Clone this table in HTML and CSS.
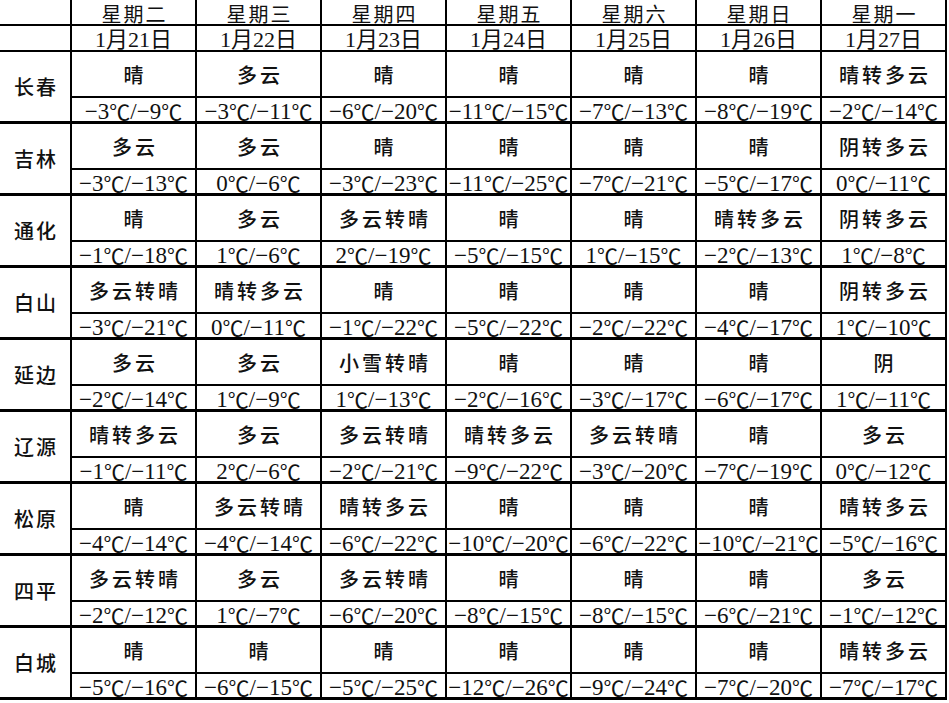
FILE: index.html
```html
<!DOCTYPE html>
<html lang="zh-CN">
<head>
<meta charset="utf-8">
<title>吉林省未来七天天气预报</title>
<link rel="stylesheet" href="styles.css">
</head>
<body>
<div class="grid">
  <div class="corner"></div>
  <div class="hd">星期二</div><div class="hd">星期三</div><div class="hd">星期四</div><div class="hd">星期五</div><div class="hd">星期六</div><div class="hd">星期日</div><div class="hd">星期一</div>
  <div class="corner"></div>
  <div class="dt">1月21日</div><div class="dt">1月22日</div><div class="dt">1月23日</div><div class="dt">1月24日</div><div class="dt">1月25日</div><div class="dt">1月26日</div><div class="dt">1月27日</div>

  <div class="city">长春</div>
  <div class="wx">晴</div><div class="wx">多云</div><div class="wx">晴</div><div class="wx">晴</div><div class="wx">晴</div><div class="wx">晴</div><div class="wx">晴转多云</div>
  <div class="tp">−3<i>℃</i>/−9<i>℃</i></div><div class="tp">−3<i>℃</i>/−11<i>℃</i></div><div class="tp">−6<i>℃</i>/−20<i>℃</i></div><div class="tp">−11<i>℃</i>/−15<i>℃</i></div><div class="tp">−7<i>℃</i>/−13<i>℃</i></div><div class="tp">−8<i>℃</i>/−19<i>℃</i></div><div class="tp">−2<i>℃</i>/−14<i>℃</i></div>

  <div class="city">吉林</div>
  <div class="wx">多云</div><div class="wx">多云</div><div class="wx">晴</div><div class="wx">晴</div><div class="wx">晴</div><div class="wx">晴</div><div class="wx">阴转多云</div>
  <div class="tp">−3<i>℃</i>/−13<i>℃</i></div><div class="tp">0<i>℃</i>/−6<i>℃</i></div><div class="tp">−3<i>℃</i>/−23<i>℃</i></div><div class="tp">−11<i>℃</i>/−25<i>℃</i></div><div class="tp">−7<i>℃</i>/−21<i>℃</i></div><div class="tp">−5<i>℃</i>/−17<i>℃</i></div><div class="tp">0<i>℃</i>/−11<i>℃</i></div>

  <div class="city">通化</div>
  <div class="wx">晴</div><div class="wx">多云</div><div class="wx">多云转晴</div><div class="wx">晴</div><div class="wx">晴</div><div class="wx">晴转多云</div><div class="wx">阴转多云</div>
  <div class="tp">−1<i>℃</i>/−18<i>℃</i></div><div class="tp">1<i>℃</i>/−6<i>℃</i></div><div class="tp">2<i>℃</i>/−19<i>℃</i></div><div class="tp">−5<i>℃</i>/−15<i>℃</i></div><div class="tp">1<i>℃</i>/−15<i>℃</i></div><div class="tp">−2<i>℃</i>/−13<i>℃</i></div><div class="tp">1<i>℃</i>/−8<i>℃</i></div>

  <div class="city">白山</div>
  <div class="wx">多云转晴</div><div class="wx">晴转多云</div><div class="wx">晴</div><div class="wx">晴</div><div class="wx">晴</div><div class="wx">晴</div><div class="wx">阴转多云</div>
  <div class="tp">−3<i>℃</i>/−21<i>℃</i></div><div class="tp">0<i>℃</i>/−11<i>℃</i></div><div class="tp">−1<i>℃</i>/−22<i>℃</i></div><div class="tp">−5<i>℃</i>/−22<i>℃</i></div><div class="tp">−2<i>℃</i>/−22<i>℃</i></div><div class="tp">−4<i>℃</i>/−17<i>℃</i></div><div class="tp">1<i>℃</i>/−10<i>℃</i></div>

  <div class="city">延边</div>
  <div class="wx">多云</div><div class="wx">多云</div><div class="wx">小雪转晴</div><div class="wx">晴</div><div class="wx">晴</div><div class="wx">晴</div><div class="wx">阴</div>
  <div class="tp">−2<i>℃</i>/−14<i>℃</i></div><div class="tp">1<i>℃</i>/−9<i>℃</i></div><div class="tp">1<i>℃</i>/−13<i>℃</i></div><div class="tp">−2<i>℃</i>/−16<i>℃</i></div><div class="tp">−3<i>℃</i>/−17<i>℃</i></div><div class="tp">−6<i>℃</i>/−17<i>℃</i></div><div class="tp">1<i>℃</i>/−11<i>℃</i></div>

  <div class="city">辽源</div>
  <div class="wx">晴转多云</div><div class="wx">多云</div><div class="wx">多云转晴</div><div class="wx">晴转多云</div><div class="wx">多云转晴</div><div class="wx">晴</div><div class="wx">多云</div>
  <div class="tp">−1<i>℃</i>/−11<i>℃</i></div><div class="tp">2<i>℃</i>/−6<i>℃</i></div><div class="tp">−2<i>℃</i>/−21<i>℃</i></div><div class="tp">−9<i>℃</i>/−22<i>℃</i></div><div class="tp">−3<i>℃</i>/−20<i>℃</i></div><div class="tp">−7<i>℃</i>/−19<i>℃</i></div><div class="tp">0<i>℃</i>/−12<i>℃</i></div>

  <div class="city">松原</div>
  <div class="wx">晴</div><div class="wx">多云转晴</div><div class="wx">晴转多云</div><div class="wx">晴</div><div class="wx">晴</div><div class="wx">晴</div><div class="wx">晴转多云</div>
  <div class="tp">−4<i>℃</i>/−14<i>℃</i></div><div class="tp">−4<i>℃</i>/−14<i>℃</i></div><div class="tp">−6<i>℃</i>/−22<i>℃</i></div><div class="tp">−10<i>℃</i>/−20<i>℃</i></div><div class="tp">−6<i>℃</i>/−22<i>℃</i></div><div class="tp">−10<i>℃</i>/−21<i>℃</i></div><div class="tp">−5<i>℃</i>/−16<i>℃</i></div>

  <div class="city">四平</div>
  <div class="wx">多云转晴</div><div class="wx">多云</div><div class="wx">多云转晴</div><div class="wx">晴</div><div class="wx">晴</div><div class="wx">晴</div><div class="wx">多云</div>
  <div class="tp">−2<i>℃</i>/−12<i>℃</i></div><div class="tp">1<i>℃</i>/−7<i>℃</i></div><div class="tp">−6<i>℃</i>/−20<i>℃</i></div><div class="tp">−8<i>℃</i>/−15<i>℃</i></div><div class="tp">−8<i>℃</i>/−15<i>℃</i></div><div class="tp">−6<i>℃</i>/−21<i>℃</i></div><div class="tp">−1<i>℃</i>/−12<i>℃</i></div>

  <div class="city">白城</div>
  <div class="wx">晴</div><div class="wx">晴</div><div class="wx">晴</div><div class="wx">晴</div><div class="wx">晴</div><div class="wx">晴</div><div class="wx">晴转多云</div>
  <div class="tp">−5<i>℃</i>/−16<i>℃</i></div><div class="tp">−6<i>℃</i>/−15<i>℃</i></div><div class="tp">−5<i>℃</i>/−25<i>℃</i></div><div class="tp">−12<i>℃</i>/−26<i>℃</i></div><div class="tp">−9<i>℃</i>/−24<i>℃</i></div><div class="tp">−7<i>℃</i>/−20<i>℃</i></div><div class="tp">−7<i>℃</i>/−17<i>℃</i></div>
</div>
</body>
</html>
```

FILE: styles.css
```css
html, body {
  margin: 0;
  padding: 0;
  background: #fff;
}

body {
  width: 949px;
  height: 703px;
  overflow: hidden;
  color: #111;
  font-family: "Liberation Serif", "Noto Sans CJK SC", serif;
}

.grid {
  display: grid;
  grid-template-columns: 72px repeat(7, 125px);
  grid-template-rows: 26px 26px repeat(9, 46px 26px);
}

.grid > div {
  box-sizing: border-box;
  border-right: 2px solid #000;
  display: flex;
  align-items: center;
  justify-content: center;
  white-space: nowrap;
  min-width: 0;
}

.corner {
  border-bottom: 2px solid #000;
}

.hd,
.dt {
  border-bottom: 2px solid #000;
}

.hd {
  font-family: "Noto Sans CJK SC", sans-serif;
  font-size: 20px;
  line-height: 20px;
  font-weight: 400;
  letter-spacing: 2px;
  padding-left: 2px;
  padding-top: 4px;
}

.dt {
  font-size: 22px;
  line-height: 22px;
  padding-top: 3px;
}

.city {
  grid-row: span 2;
  border-bottom: 3px solid #000;
  font-family: "Noto Sans CJK SC", sans-serif;
  font-size: 20px;
  font-weight: 500;
  letter-spacing: 2px;
  padding-left: 2px;
}

.wx {
  border-bottom: 2px solid #000;
  font-family: "Noto Sans CJK SC", sans-serif;
  font-size: 20px;
  font-weight: 500;
  letter-spacing: 3px;
  padding-left: 3px;
}

.tp {
  border-bottom: 3px solid #000;
  font-size: 23px;
  line-height: 23px;
  padding-top: 3px;
}

.tp i {
  font-style: normal;
  font-family: "Noto Sans CJK SC", sans-serif;
  font-size: 21px;
}
```
